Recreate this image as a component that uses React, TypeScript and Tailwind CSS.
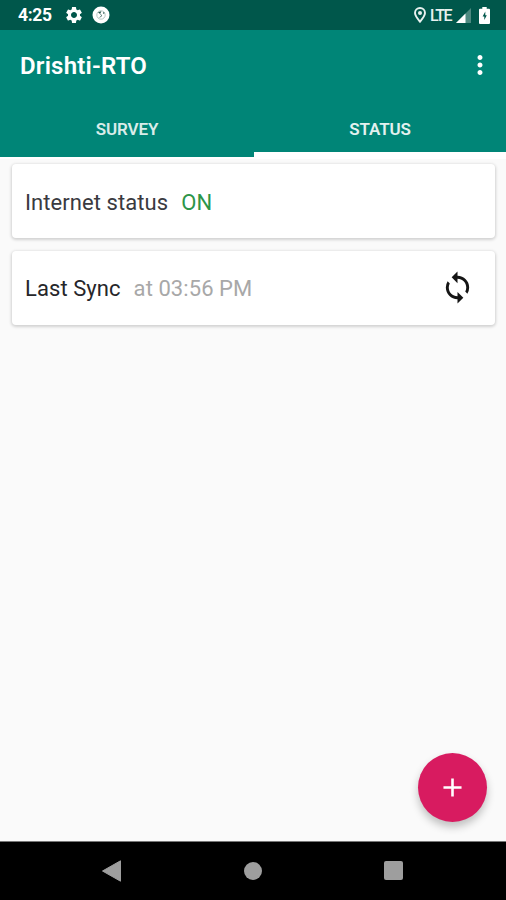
import { useState } from "react";
import { MdAdd, MdMoreVert, MdSettings, MdSync } from "react-icons/md";

type Tab = "survey" | "status";

const tabs: { id: Tab; label: string }[] = [
  { id: "survey", label: "SURVEY" },
  { id: "status", label: "STATUS" },
];

function StatusBar() {
  return (
    <div className="flex h-[30px] shrink-0 items-center bg-[#00574b] pl-[18px] pr-4 text-white">
      <span className="w-[46px] pt-[2px] text-[17.5px] font-bold leading-none tracking-[-0.3px]">
        4:25
      </span>
      <MdSettings className="size-[20px]" />
      <svg viewBox="0 0 18 18" className="ml-2 size-[18px]">
        <circle cx="9" cy="9" r="8.5" fill="#fff" />
        <circle cx="9" cy="9" r="4.2" fill="none" stroke="#b9c9c6" strokeWidth="1" />
        <path d="M6 6.200l3.400-.9-1.300 2.700z" fill="#24534b" />
        <path d="M8.400 8.400l1.600 1.200-2.400 1.800" fill="none" stroke="#4d736d" strokeWidth=".9" />
        <circle cx="11.700" cy="7" r=".8" fill="#24534b" />
      </svg>

      <div className="ml-auto flex items-center">
        <svg viewBox="0 0 12 16" className="h-4 w-3" fill="none" stroke="#e8f1ef">
          <path
            d="M6 14.700C3.600 11.800 1 8.700 1 6a5 5 0 0 1 10 0c0 2.700-2.600 5.800-5 8.700z"
            strokeWidth="1.900"
          />
          <circle cx="6" cy="6" r="2" fill="#e8f1ef" stroke="none" />
        </svg>
        <span className="ml-1 w-[24px] pt-px text-[16px] font-medium leading-none tracking-[-1.5px] text-[#e8f1ef]">
          LTE
        </span>
        <svg viewBox="0 0 15 15" className="ml-[2px] size-[15px]">
          <path d="M0 15L15 0v15z" fill="#4d8980" />
          <path d="M0 15L9.500 5.500V15z" fill="#fff" />
        </svg>
        <svg viewBox="0 0 11 17" className="ml-2 h-[17px] w-[11px]">
          <path d="M3.300 0h4.400v1.700H10a1 1 0 0 1 1 1V16a1 1 0 0 1-1 1H1a1 1 0 0 1-1-1V2.700a1 1 0 0 1 1-1h2.300z" fill="#fff" />
          <path d="M6.300 4.500L3.600 9.400h1.700V13l2.500-4.800H6.300z" fill="#00574b" />
        </svg>
      </div>
    </div>
  );
}

function NavigationBar() {
  return (
    <div className="flex h-[59px] shrink-0 items-start border-t border-[#777] bg-black px-[102px] pt-[18px]">
      <svg viewBox="0 0 20 22" className="h-[22px] w-5" fill="#9e9e9e">
        <path d="M18.500.8v20.400L.5 11z" stroke="#9e9e9e" strokeLinejoin="round" />
      </svg>
      <div className="ml-[122px] mt-[2px] size-[18px] rounded-full bg-[#9e9e9e]" />
      <div className="ml-[122px] mt-px size-[19px] shrink-0 rounded-[2px] bg-[#9e9e9e]" />
    </div>
  );
}

export default function App() {
  const [active, setActive] = useState<Tab>("status");

  return (
    <div className="relative flex h-[900px] w-[506px] flex-col overflow-hidden bg-[#fafafa] font-['Roboto',sans-serif]">
      <StatusBar />

      {/* Toolbar + tabs */}
      <header className="h-[127px] shrink-0 bg-[#008577] text-white">
        <div className="flex h-[71px] items-center justify-between pl-[20px] pr-[11px]">
          <h1 className="text-[24px] font-semibold leading-none tracking-[0.2px]">Drishti-RTO</h1>
          <button aria-label="More options" className="-mt-[2px]">
            <MdMoreVert className="size-[30px]" />
          </button>
        </div>
        <div className="grid h-14 grid-cols-[254px_252px]">
          {tabs.map((tab) => (
            <button
              key={tab.id}
              onClick={() => setActive(tab.id)}
              className={
                active === tab.id
                  ? "border-b-[5px] border-white pt-[5px] text-[17px] font-semibold leading-none tracking-[-0.1px] text-[#e3f1ef]"
                  : "border-b-[5px] border-transparent pt-[5px] text-[17px] font-semibold leading-none tracking-[-0.1px] text-[#d9ece9]"
              }
            >
              {tab.label}
            </button>
          ))}
        </div>
      </header>

      {/* Status cards */}
      <main className="flex flex-1 flex-col gap-[13px] border-t-2 border-white px-3 pt-[5px] text-[22px] tracking-[0.07px]">
        <section className="mr-[-1px] flex h-[74px] items-center rounded-[4px] bg-white px-[13px] pt-[2px] shadow-[0_1px_3px_1px_rgba(0,0,0,0.16)]">
          <span className="text-[#3a3a40]">Internet status</span>
          <span className="ml-[13px] text-[#2c9548]">ON</span>
        </section>
        <section className="mr-[-1px] flex h-[74px] items-center rounded-[4px] bg-white px-[13px] shadow-[0_1px_3px_1px_rgba(0,0,0,0.16)]">
          <span className="text-[#26262a]">Last Sync</span>
          <span className="ml-[13px] text-[#a8a8a8]">at 03:56 PM</span>
          <button aria-label="Sync now" className="-mt-[2px] ml-auto mr-[7px]">
            <MdSync className="size-[35px] text-[#151515]" />
          </button>
        </section>
      </main>

      <button
        aria-label="Add survey"
        className="absolute bottom-[78px] right-[19px] flex size-[69px] items-center justify-center rounded-full bg-[#d81b60] text-white shadow-[0_5px_9px_rgba(0,0,0,0.24)]"
      >
        <MdAdd className="size-[31px]" />
      </button>

      <NavigationBar />
    </div>
  );
}
